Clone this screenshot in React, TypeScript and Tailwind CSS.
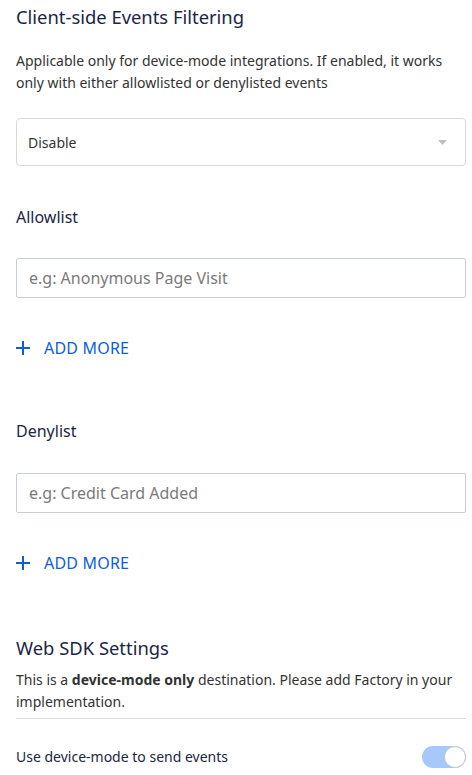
import React from "react";

function AddMore() {
  return (
    <button className="flex items-center gap-[14px] text-[16px] leading-[22px] text-[#0d5ddb] tracking-[0.2px]">
      <svg width="14" height="14" viewBox="0 0 14 14" className="shrink-0">
        <path d="M7 0v14M0 7h14" stroke="#0d5ddb" strokeWidth="2" />
      </svg>
      <span>ADD MORE</span>
    </button>
  );
}

export default function App() {
  return (
    <div
      className="w-[472px] h-[775px] overflow-hidden bg-white pl-4 pr-[6px]"
      style={{ fontFamily: '"Noto Sans", "Open Sans", sans-serif' }}
    >
      <h2 className="mt-[4px] text-[18.4px] leading-[26px] text-[#1b2547]">Client-side Events Filtering</h2>
      <p className="mt-[20px] text-[14px] leading-[22px] text-[#333333]">
        Applicable only for device-mode integrations. If enabled, it works only with either allowlisted or denylisted events
      </p>
      <div className="mt-[24px] h-[48px] rounded-[4px] border border-[#d9d9d9] flex items-center justify-between pl-[11px] pr-[18px]">
        <span className="text-[14px] text-[#333333]">Disable</span>
        <svg width="9" height="5" viewBox="0 0 9 5">
          <path d="M0 0h9L4.5 5z" fill="#bfbfbf" />
        </svg>
      </div>

      <div className="mt-[40px] text-[16px] leading-[22px] text-[#1b2547]">Allowlist</div>
      <div className="mt-[30px] h-[40px] rounded-[2px] border border-[#c9ced6] flex items-center pl-[12px]">
        <span className="text-[16px] text-[#7a7a7a]">e.g: Anonymous Page Visit</span>
      </div>
      <div className="mt-[39px]">
        <AddMore />
      </div>

      <div className="mt-[61px] text-[16px] leading-[22px] text-[#1b2547]">Denylist</div>
      <div className="mt-[31px] h-[40px] rounded-[2px] border border-[#c9ced6] flex items-center pl-[12px]">
        <span className="text-[16px] text-[#7a7a7a]">e.g: Credit Card Added</span>
      </div>
      <div className="mt-[39px]">
        <AddMore />
      </div>

      <h2 className="mt-[61px] text-[18.4px] leading-[26px] text-[#1b2547]">Web SDK Settings</h2>
      <p className="mt-[8px] text-[14px] leading-[22px] text-[#333333]">
        This is a <span className="font-bold">device-mode only</span> destination. Please add Factory in your implementation.
      </p>
      <div className="mt-[5px] h-px bg-[#dcdcdc]" />
      <div className="mt-[27px] flex items-center justify-between">
        <span className="text-[14px] leading-[22px] text-[#1b2547]">Use device-mode to send events</span>
        <div className="w-[44px] h-[22px] rounded-full bg-[#a6c8fb] flex items-center justify-end">
          <div className="w-[22px] h-[22px] rounded-full bg-white border border-[#c8c8c8]" />
        </div>
      </div>
    </div>
  );
}
